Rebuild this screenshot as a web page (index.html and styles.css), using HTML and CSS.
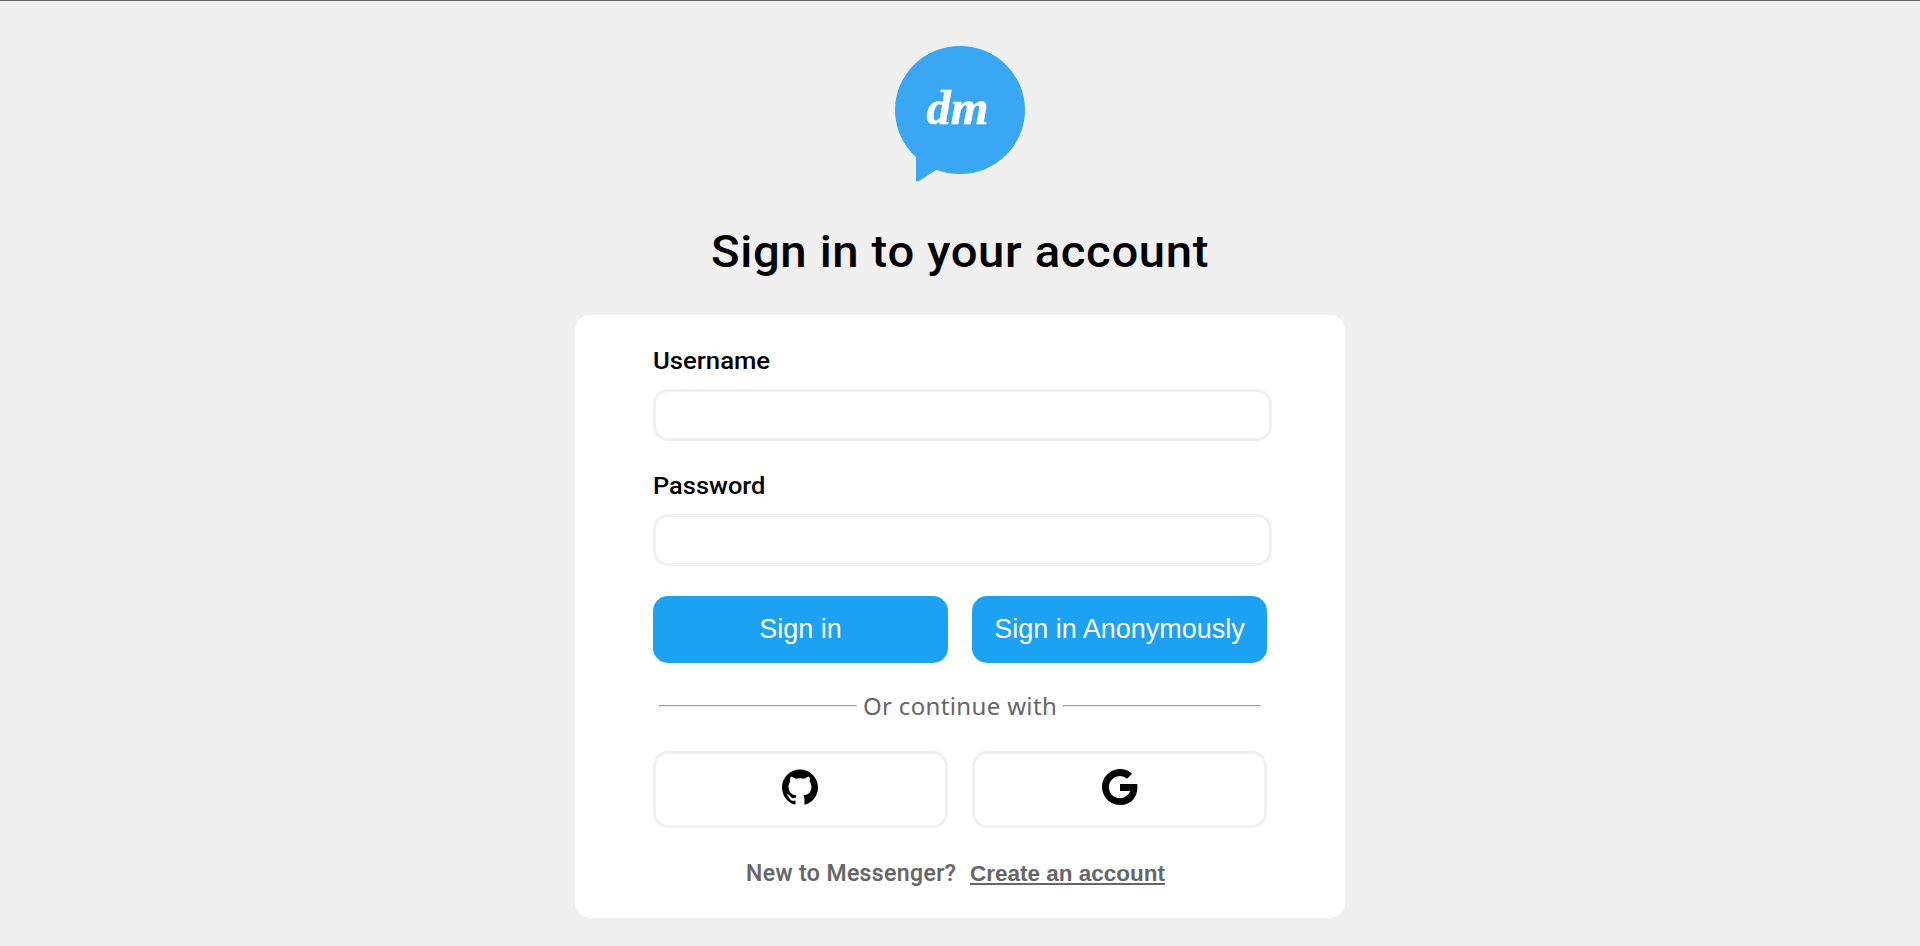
FILE: index.html
```html
<!DOCTYPE html>
<html lang="en">
<head>
<meta charset="utf-8">
<title>Messenger</title>
<link rel="stylesheet" href="styles.css">
</head>
<body>
<main class="page">
  <svg class="logo" viewBox="0 0 130 136" width="130" height="136" role="img">
    <ellipse cx="65" cy="64" rx="65" ry="64"/>
    <path d="M21 105V135H24L42 123.5Z"/>
    <text class="logo-text" x="31.500" y="77.500">dm</text>
  </svg>
  <h1 class="title"><span class="wide title-text">Sign in to your account</span></h1>
  <form class="card">
    <label class="label" for="username"><span class="wide user-text">Username</span></label>
    <input class="input" id="username" type="text">
    <label class="label" for="password"><span class="wide pass-text">Password</span></label>
    <input class="input" id="password" type="password">
    <div class="row actions">
      <button class="btn" type="button">Sign in</button>
      <button class="btn" type="button">Sign in Anonymously</button>
    </div>
    <div class="divider"><hr class="line"><span class="divider-text">Or continue with</span><hr class="line"></div>
    <div class="row">
      <button class="social github" type="button" aria-label="GitHub">
        <svg width="36" height="36" viewBox="0 0 24 24"><path d="M12 .297c-6.630 0-12 5.373-12 12 0 5.303 3.438 9.800 8.205 11.385.6.113.82-.258.82-.577 0-.285-.01-1.040-.015-2.040-3.338.724-4.042-1.610-4.042-1.610C4.422 18.070 3.633 17.700 3.633 17.700c-1.087-.744.084-.729.084-.729 1.205.084 1.838 1.236 1.838 1.236 1.070 1.835 2.809 1.305 3.495.998.108-.776.417-1.305.76-1.605-2.665-.3-5.466-1.332-5.466-5.930 0-1.310.465-2.380 1.235-3.220-.135-.303-.54-1.523.105-3.176 0 0 1.005-.322 3.300 1.230.96-.267 1.980-.399 3-.405 1.020.006 2.040.138 3 .405 2.280-1.552 3.285-1.230 3.285-1.230.645 1.653.24 2.873.12 3.176.765.84 1.230 1.910 1.230 3.220 0 4.610-2.805 5.625-5.475 5.920.42.36.81 1.096.81 2.220 0 1.606-.015 2.896-.015 3.286 0 .315.21.69.825.57C20.565 22.092 24 17.592 24 12.297c0-6.627-5.373-12-12-12"/></svg>
      </button>
      <button class="social" type="button" aria-label="Google">
        <svg width="36" height="36" viewBox="0 0 36 36"><path d="M18 15H35.200C36.400 25 31.500 36 18 36A18 18 0 1 1 30.100 4.700L25 9.700A11 11 0 1 0 28.200 22H18Z"/></svg>
      </button>
    </div>
    <p class="footer"><span class="new-text">New to Messenger?</span><a class="link">Create an account</a></p>
  </form>
</main>
</body>
</html>
```
FILE: styles.css
```css
* { box-sizing: border-box; }
body {
  margin: 0;
  height: 946px;
  overflow: hidden;
  background: #f0f0f0;
  border-top: 1px solid #666;
  font-family: Roboto, sans-serif;
  color: #000;
}
.page {
  display: flex;
  flex-direction: column;
  align-items: center;
  padding-top: 45px;
}
.logo { display: block; fill: #39a7f3; }
.logo-text {
  fill: #fff;
  stroke: #fff;
  stroke-width: 0.6px;
  font: italic bold 48.500px "Liberation Serif", serif;
}
.title {
  width: 770px;
  margin: 40px 0 0;
  padding-left: 136px;
  height: 60px;
  line-height: 60px;
  font-size: 45px;
  font-weight: 500;
  white-space: nowrap;
}
.wide { display: inline-block; transform-origin: left center; }
.title-text { transform: scaleX(1.05); letter-spacing: 0.6px; }
.user-text { transform: scaleX(1.07); }
.pass-text { transform: scaleX(1.06); }
.card {
  width: 770px;
  height: 603px;
  margin-top: 33px;
  padding: 30px 73px 0 78px;
  border-radius: 15px;
  background: #fff;
}
.label {
  display: block;
  height: 30px;
  line-height: 32px;
  font-size: 24px;
  font-weight: 500;
}
.input {
  display: block;
  width: 619px;
  height: 52px;
  margin: 14px 0 29px;
  border: 3px solid #f0f0f0;
  border-radius: 15px;
  background: #fff;
  outline: none;
}
.row { display: flex; gap: 24px; }
.actions { padding-top: 1px; }
.btn, .social {
  width: 295px;
  flex: none;
  padding: 0;
  border-radius: 15px;
  white-space: nowrap;
}
.btn {
  height: 67px;
  border: 0;
  background: #1da1f2;
  color: #fff;
  font: 27px "Liberation Sans", sans-serif;
}
.divider {
  display: flex;
  align-items: center;
  justify-content: space-between;
  width: 602px;
  height: 36px;
  margin: 25px 0 27px 6px;
  color: #666;
}
.line {
  width: 198px;
  height: 2px;
  margin: 0;
  border: 1px solid;
  border-color: #9a9a9a #eee #eee #9a9a9a;
}
.divider-text {
  font: 24px/36px "Noto Sans", sans-serif;
  letter-spacing: 0.35px;
  white-space: nowrap;
}
.social {
  display: flex;
  justify-content: center;
  height: 77px;
  padding-top: 15px;
  border: 3px solid #f0f0f0;
  background: #fff;
}
.github { padding-right: 1px; }
.footer {
  display: flex;
  margin: 31px 0 0 93px;
  height: 30px;
  line-height: 30px;
  color: #666;
  white-space: nowrap;
}
.new-text {
  width: 224px;
  font-size: 23px;
  font-weight: 500;
  letter-spacing: 0.4px;
  -webkit-text-stroke: 0.2px #666;
}
.link {
  font: bold 22.500px/30px "Liberation Sans", sans-serif;
  text-decoration: underline;
}
```
